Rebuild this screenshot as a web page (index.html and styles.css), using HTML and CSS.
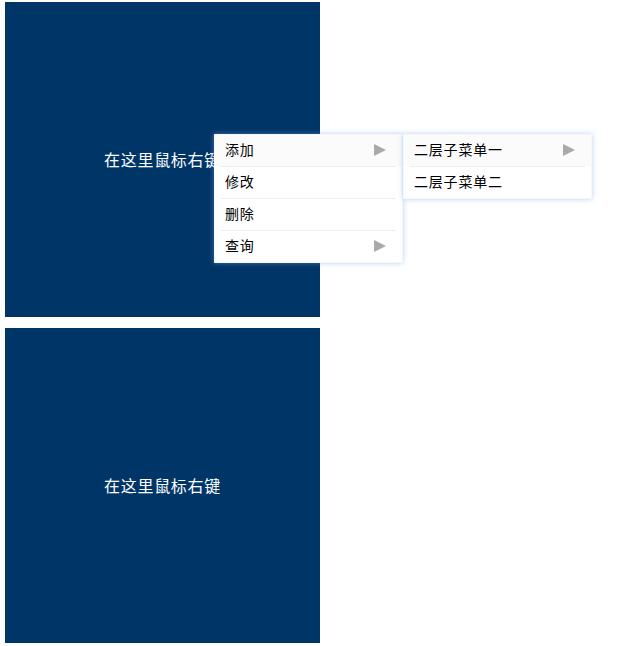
FILE: index.html
```html
<!DOCTYPE html>
<html>
<head>
<meta charset="utf-8">
<link rel="stylesheet" href="styles.css">
</head>
<body>
<div class="page">
  <div class="box">在这里鼠标右键</div>
  <div class="box">在这里鼠标右键</div>
</div>
<div class="menu main-menu">
  <div class="item hover"><span>添加</span><span class="arrow"></span></div>
  <div class="sep"></div>
  <div class="item"><span>修改</span></div>
  <div class="sep"></div>
  <div class="item"><span>删除</span></div>
  <div class="sep"></div>
  <div class="item"><span>查询</span><span class="arrow"></span></div>
</div>
<div class="menu sub-menu">
  <div class="item hover"><span>二层子菜单一</span><span class="arrow"></span></div>
  <div class="sep"></div>
  <div class="item"><span>二层子菜单二</span></div>
</div>
</body>
</html>
```
FILE: styles.css
```css
html, body {
  margin: 0;
  padding: 0;
  background: #fff;
  font-family: "Noto Sans CJK SC", "Noto Sans", sans-serif;
}
.page {
  display: flex;
  flex-direction: column;
  gap: 11px;
  padding: 2px 5px;
}
.box {
  width: 315px;
  height: 315px;
  background: #003567;
  color: #fff;
  font-size: 16px;
  letter-spacing: 0.7px;
  display: flex;
  align-items: center;
  justify-content: center;
  padding-bottom: 2px;
  box-sizing: border-box;
}
.menu {
  position: absolute;
  width: 187px;
  background: #fff;
  border: 1px solid #f4f7fb;
  box-shadow: 0 0 5px rgba(120, 170, 235, 0.55);
  font-size: 14px;
  letter-spacing: 0.8px;
  color: #000;
}
.main-menu {
  left: 214px;
  top: 134px;
}
.sub-menu {
  left: 403px;
  top: 134px;
}
.item {
  height: 31px;
  box-sizing: border-box;
  display: flex;
  align-items: center;
  justify-content: space-between;
  padding: 0 16px 4px 10px;
}
.item.hover {
  background: #fbfbfb;
}
.sep {
  height: 1px;
  margin: 0 6px;
  background: #eeeeee;
}
.arrow {
  width: 0;
  height: 0;
  margin-top: 2px;
  border-top: 6px solid transparent;
  border-bottom: 6px solid transparent;
  border-left: 12px solid #aaaaaa;
}
```
